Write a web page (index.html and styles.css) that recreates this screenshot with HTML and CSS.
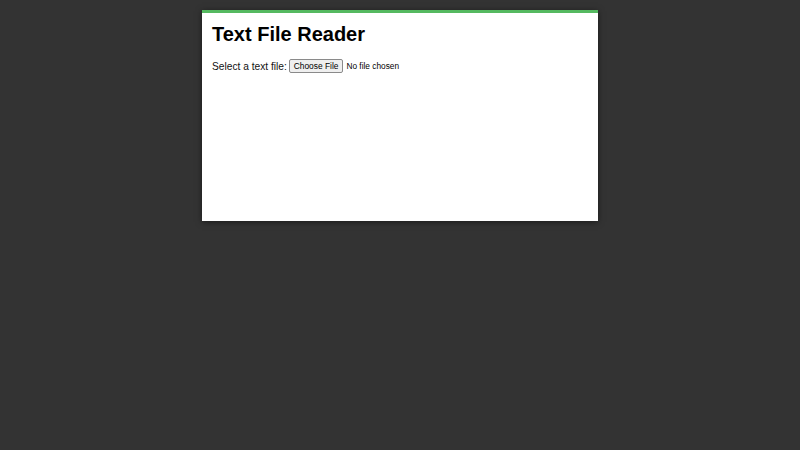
FILE: index.html
```html
<!doctype html>
<html lang="en">
  <head>
    <meta charset="UTF-8" />
    <meta name="viewport" content="width=device-width, initial-scale=1.0" />
    <title>Text File Reader</title>
    <link rel="stylesheet" href="styles.css">
  </head>
  <body>
    <div class="container">
      <h1>Text File Reader</h1>
      <div class="picker">
        <label for="file-input">Select a text file:</label>
        <input type="file" id="file-input" accept=".txt,text/plain" />
      </div>
      <pre id="file-content" class="file-content"></pre>
    </div>
  </body>
</html>
```

FILE: styles.css
```css
body {
  font-family: "Liberation Sans", Arial, sans-serif;
  margin: 0;
  padding: 10px 0;
  background-color: #333;
  color: #000;
}
.container {
  width: 376px;
  min-height: 188px;
  margin: 0 auto;
  padding: 10px;
  background-color: white;
  border-top: 3px solid #55b960;
  box-shadow: 0 1px 6px rgba(0, 0, 0, 0.5);
}
h1 {
  font-size: 20px;
  line-height: 23px;
  margin: 0 0 13px;
}
.picker {
  display: flex;
  align-items: center;
  gap: 2px;
}
label {
  font-size: 10.2px;
  color: #111;
}
input[type="file"] {
  font-family: "Liberation Sans", Arial, sans-serif;
  font-size: 8.3px;
  color: #000;
}
input[type="file"]::file-selector-button {
  font-family: inherit;
  font-size: 8.4px;
  height: 14px;
  padding: 0 4px;
  margin-right: 3px;
  background-color: #efefef;
  border: 1px solid #8a8a8a;
  border-radius: 2px;
}
.file-content {
  margin: 10px 0 0;
  white-space: pre-wrap;
}
```
